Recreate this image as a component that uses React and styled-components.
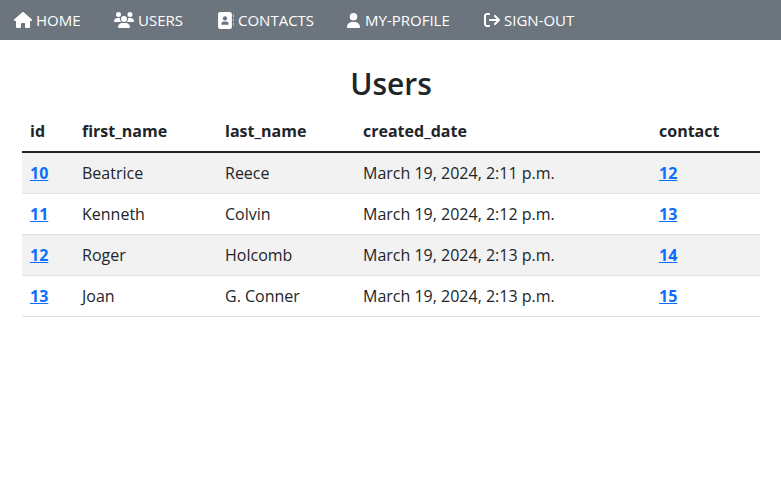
import React from "react";
import styled, { createGlobalStyle } from "styled-components";
import { FaHouse, FaUsers, FaUser, FaArrowRightFromBracket } from "react-icons/fa6";

const GlobalStyle = createGlobalStyle`
  *, *::before, *::after { box-sizing: border-box; }
  body {
    margin: 0;
    background: #fff;
    color: #212529;
    font: 400 16px/24px "Open Sans", "Noto Sans", sans-serif;
  }
`;

const Nav = styled.nav`
  display: flex;
  height: 40px;
  padding-left: 14px;
  background: #6c757d;
`;

const NavItem = styled.a`
  display: flex;
  flex: 0 0 ${(p) => p.$slot}px;
  align-items: center;
  gap: ${(p) => p.$gap || 4}px;
  color: #fff;
  white-space: nowrap;
  text-decoration: none;
  svg { flex: none; }
`;

const NavLabel = styled.span`
  font-size: 15px;
  letter-spacing: ${(p) => p.$track || 0}px;
`;

const Page = styled.main`
  padding: 24px 21px 0 22px;
`;

const Title = styled.h1`
  margin: 0 0 7px;
  font-size: 30px;
  font-weight: 600;
  line-height: 40px;
  text-align: center;
`;

const Table = styled.table`
  width: 100%;
  table-layout: fixed;
  border-collapse: collapse;
`;

const Col = styled.col`
  width: ${(p) => p.$w}px;
`;

const HeadCell = styled.th`
  height: 41px;
  padding: 8px;
  border-bottom: 2px solid #212529;
  font-weight: 700;
  text-align: left;
`;

const Row = styled.tr`
  background: ${(p) => (p.$striped ? "#f2f2f2" : "#fff")};
`;

const Cell = styled.td`
  height: 41px;
  padding: 8px;
  border-bottom: 1px solid #dee2e6;
  white-space: nowrap;
`;

const RecordLink = styled.a`
  color: #0d6efd;
  font-weight: 700;
  text-decoration: underline;
`;

const AddressBook = () => (
  <svg width="17" height="17" viewBox="0 0 512 512">
    <path fill="#fff" d="M96 0C60.700 0 32 28.700 32 64v384c0 35.300 28.700 64 64 64h288c35.300 0 64-28.700 64-64V64c0-35.300-28.700-64-64-64H96z" />
    <circle cx="240" cy="192" r="64" fill="#6c757d" />
    <path fill="#6c757d" d="M208 288h64c44.200 0 80 35.800 80 80 0 8.800-7.200 16-16 16H144c-8.800 0-16-7.200-16-16 0-44.200 35.800-80 80-80z" />
    <path fill="#ffc107" d="M480 80c0-8.800 7.200-16 16-16s16 7.200 16 16v64c0 8.800-7.200 16-16 16s-16-7.200-16-16zM480 208c0-8.800 7.200-16 16-16s16 7.200 16 16v64c0 8.800-7.200 16-16 16s-16-7.200-16-16zM480 336c0-8.800 7.200-16 16-16s16 7.200 16 16v64c0 8.800-7.200 16-16 16s-16-7.200-16-16z" />
  </svg>
);

const users = [
  ["10", "Beatrice", "Reece", "March 19, 2024, 2:11 p.m.", "12"],
  ["11", "Kenneth", "Colvin", "March 19, 2024, 2:12 p.m.", "13"],
  ["12", "Roger", "Holcomb", "March 19, 2024, 2:13 p.m.", "14"],
  ["13", "Joan", "G. Conner", "March 19, 2024, 2:13 p.m.", "15"],
];

export default function App() {
  return (
    <>
      <GlobalStyle />
      <Nav>
        <NavItem $slot={100}><FaHouse size={18} /><NavLabel>HOME</NavLabel></NavItem>
        <NavItem $slot={103}><FaUsers size={20} /><NavLabel>USERS</NavLabel></NavItem>
        <NavItem $slot={129}><AddressBook /><NavLabel>CONTACTS</NavLabel></NavItem>
        <NavItem $slot={138}><FaUser size={15} /><NavLabel>MY-PROFILE</NavLabel></NavItem>
        <NavItem $slot={100}><FaArrowRightFromBracket size={16} /><NavLabel>SIGN-OUT</NavLabel></NavItem>
      </Nav>
      <Page>
        <Title>Users</Title>
        <Table>
          <colgroup>
            <Col $w={52} /><Col $w={143} /><Col $w={138} /><Col $w={296} /><Col $w={109} />
          </colgroup>
          <thead>
            <tr>
              {["id", "first_name", "last_name", "created_date", "contact"].map((h) => (
                <HeadCell key={h}>{h}</HeadCell>
              ))}
            </tr>
          </thead>
          <tbody>
            {users.map(([id, first, last, created, contact], i) => (
              <Row key={id} $striped={i % 2 === 0}>
                <Cell><RecordLink>{id}</RecordLink></Cell>
                <Cell>{first}</Cell>
                <Cell>{last}</Cell>
                <Cell>{created}</Cell>
                <Cell><RecordLink>{contact}</RecordLink></Cell>
              </Row>
            ))}
          </tbody>
        </Table>
      </Page>
    </>
  );
}
